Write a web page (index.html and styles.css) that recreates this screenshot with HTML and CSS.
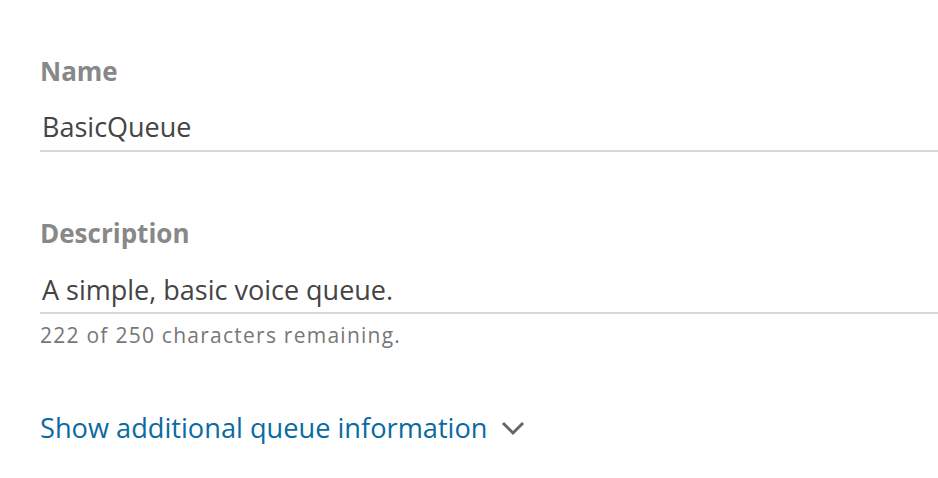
FILE: index.html
```html
<!DOCTYPE html>
<html lang="en">
<head>
<meta charset="utf-8">
<title>Queue</title>
<link rel="stylesheet" href="styles.css">
</head>
<body>
<main class="form">
  <section class="field field-name">
    <label class="label">Name</label>
    <div class="value">BasicQueue</div>
  </section>
  <section class="field field-desc">
    <label class="label">Description</label>
    <div class="value">A simple, basic voice queue.</div>
    <div class="hint">222 of 250 characters remaining.</div>
  </section>
  <a class="toggle" href="#">Show additional queue information
    <svg class="chev" width="24" height="15" viewBox="0 0 24 15"><path d="M2 2 L12 12 L22 2" fill="none" stroke="#666" stroke-width="3"/></svg>
  </a>
</main>
</body>
</html>
```
FILE: styles.css
```css
* { box-sizing: border-box; }
html, body { margin: 0; padding: 0; background: #fff; }
body { font-family: "Open Sans", "Noto Sans", sans-serif; }
.form { padding: 55px 0 0 40px; display: flex; flex-direction: column; align-items: stretch; }
.field { display: flex; flex-direction: column; }
.field-desc { margin-top: 65px; }
.label { font-size: 26px; line-height: 32px; font-weight: 700; color: #888; }
.value { margin-top: 24px; font-size: 27px; line-height: 32px; color: #444; padding: 0 0 7px 2px; border-bottom: 2px solid #d8d8d8; }
.field-desc .value { margin-top: 25px; padding-bottom: 6px; }
.hint { margin-top: 9px; font-size: 21px; line-height: 24px; letter-spacing: 1.25px; color: #777; }
.toggle { margin-top: 65px; font-size: 27.2px; line-height: 32px; color: #0a6aa1; text-decoration: none; display: flex; align-items: center; gap: 13px; align-self: flex-start; }
.chev { margin-top: 0; }
```
